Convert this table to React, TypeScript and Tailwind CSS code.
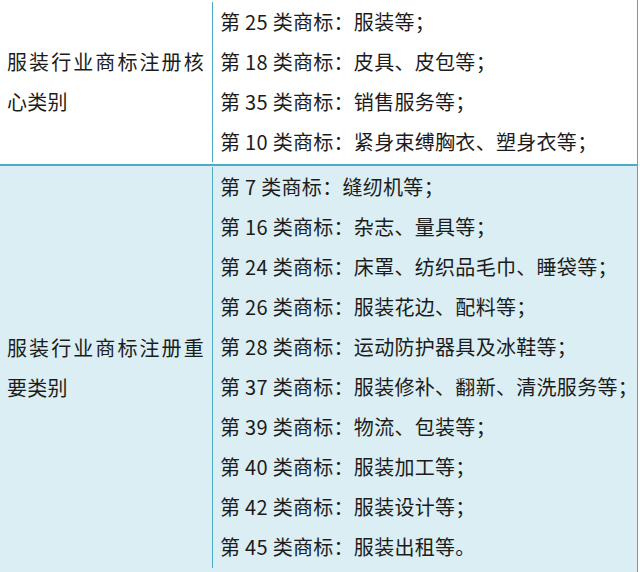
const core = [
  '第 25 类商标：服装等；',
  '第 18 类商标：皮具、皮包等；',
  '第 35 类商标：销售服务等；',
  '第 10 类商标：紧身束缚胸衣、塑身衣等；',
];

const important = [
  '第 7 类商标：缝纫机等；',
  '第 16 类商标：杂志、量具等；',
  '第 24 类商标：床罩、纺织品毛巾、睡袋等；',
  '第 26 类商标：服装花边、配料等；',
  '第 28 类商标：运动防护器具及冰鞋等；',
  '第 37 类商标：服装修补、翻新、清洗服务等；',
  '第 39 类商标：物流、包装等；',
  '第 40 类商标：服装加工等；',
  '第 42 类商标：服装设计等；',
  '第 45 类商标：服装出租等。',
];

function Row({ title, items, className }: { title: string; items: string[]; className: string }) {
  return (
    <div className={`grid grid-cols-[213px_1fr] ${className}`}>
      <div className="flex items-center border-r border-[#4bacc6] pl-[7px] pr-[8px]">
        <p className="text-justify leading-[40px]">{title}</p>
      </div>
      <div className="pl-[7px] pr-[2px]">
        {items.map((item) => (
          <p key={item} className="whitespace-nowrap leading-[40px]">
            {item}
          </p>
        ))}
      </div>
    </div>
  );
}

export default function App() {
  return (
    <div
      className="h-[572px] w-[640px] overflow-hidden bg-white text-[20px] tracking-[0.3px] text-[#1c1c1c]"
      style={{ fontFamily: '"Noto Sans CJK SC", "Noto Sans", sans-serif' }}
    >
      <div className="flex h-full w-[638px] flex-col border-r border-[#4bacc6]">
        <Row
          title="服装行业商标注册核心类别"
          items={core}
          className="border-b-2 border-[#4bacc6] bg-white py-[2px]"
        />
        <Row
          title="服装行业商标注册重要类别"
          items={important}
          className="flex-1 bg-[#daeef3] pt-[1px] pb-[4px]"
        />
      </div>
    </div>
  );
}
